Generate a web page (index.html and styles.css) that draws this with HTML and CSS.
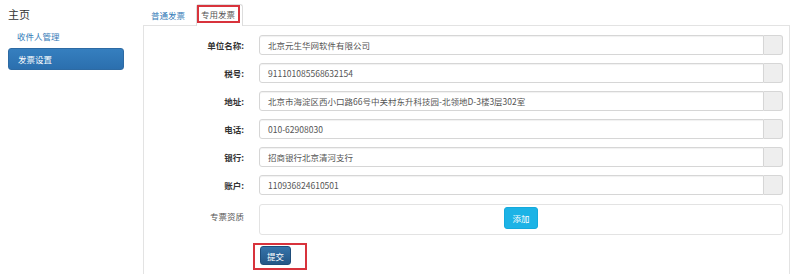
FILE: index.html
```html
<!DOCTYPE html>
<html lang="zh-CN">

<head>
    <meta charset="UTF-8">
    <title>发票设置</title>
    <link rel="stylesheet" href="styles.css">
</head>

<body>
    <div class="page">
        <div class="sidebar">
            <h3 class="side-title">主页</h3>
            <a class="side-link">收件人管理</a>
            <a class="side-link active">发票设置</a>
        </div>

        <div class="main">
            <ul class="tabs">
                <li class="tab">普通发票</li>
                <li class="tab active"><span class="mark">专用发票</span></li>
            </ul>

            <div class="panel">
                <div class="row">
                    <label class="label">单位名称:</label>
                    <div class="field"><span class="input">北京元生华网软件有限公司</span><span class="addon"></span></div>
                </div>
                <div class="row">
                    <label class="label">税号:</label>
                    <div class="field"><span class="input">911101085568632154</span><span class="addon"></span></div>
                </div>
                <div class="row">
                    <label class="label">地址:</label>
                    <div class="field"><span class="input">北京市海淀区西小口路66号中关村东升科技园-北领地D-3楼3层302室</span><span class="addon"></span></div>
                </div>
                <div class="row">
                    <label class="label">电话:</label>
                    <div class="field"><span class="input">010-62908030</span><span class="addon"></span></div>
                </div>
                <div class="row">
                    <label class="label">银行:</label>
                    <div class="field"><span class="input">招商银行北京清河支行</span><span class="addon"></span></div>
                </div>
                <div class="row">
                    <label class="label">账户:</label>
                    <div class="field"><span class="input">110936824610501</span><span class="addon"></span></div>
                </div>
                <div class="row row-upload">
                    <label class="label plain">专票资质</label>
                    <div class="upload-box">
                        <button class="btn-add">添加</button>
                    </div>
                </div>
                <div class="row row-submit">
                    <span class="label"></span>
                    <div class="submit-mark">
                        <button class="btn-submit">提交</button>
                    </div>
                </div>
            </div>
        </div>
    </div>
</body>

</html>
```

FILE: styles.css
```css
body {
    margin: 0;
    font-family: "Noto Sans CJK SC", "Liberation Sans", sans-serif;
    font-size: 8.5px;
    color: #333;
    background: #fff;
}

.page {
    display: flex;
    align-items: flex-start;
}

/* left menu */
.sidebar {
    width: 116px;
    margin-left: 8px;
    flex-shrink: 0;
}

.side-title {
    margin: 6px 0 3px 0;
    font-size: 11px;
    font-weight: normal;
    line-height: 16px;
    color: #333;
}

.side-link {
    display: block;
    height: 22px;
    line-height: 22px;
    padding-left: 9px;
    color: #337ab7;
    border-radius: 3px;
}

.side-link.active {
    margin-top: 1px;
    color: #fff;
    background: linear-gradient(#357fbf, #2b6fae);
    border: 1px solid #2d6aa3;
    height: 20px;
    line-height: 20px;
}

/* tabs */
.main {
    margin-left: 19px;
    width: 647px;
}

.tabs {
    list-style: none;
    margin: 0;
    padding: 0;
    height: 25px;
    display: flex;
    align-items: flex-end;
}

.tab {
    height: 20px;
    line-height: 20px;
    padding: 0 8px;
    color: #337ab7;
    margin-right: 3px;
}

.tab.active {
    display: flex;
    align-items: flex-start;
    color: #555;
    background: #fff;
    border: 1px solid #ddd;
    border-bottom: none;
    border-radius: 3px 3px 0 0;
    padding: 0 2px 0 0;
    height: 21px;
    margin-bottom: -1px;
    position: relative;
    z-index: 1;
}

.mark {
    display: block;
    border: 2px solid #d8333c;
    height: 14px;
    line-height: 14px;
    padding: 0 3px 0 2px;
}

/* form panel */
.panel {
    border: 1px solid #e3e3e3;
    height: 260px;
    padding: 9px 6px 0 0;
    box-sizing: border-box;
}

.row {
    display: flex;
    align-items: center;
    margin-bottom: 8px;
}

.label {
    width: 100px;
    flex-shrink: 0;
    text-align: right;
    font-weight: bold;
    margin-right: 15px;
    color: #333;
}

.label.plain {
    font-weight: normal;
    color: #555;
}

.field {
    flex: 1;
    display: flex;
    height: 20px;
}

.input {
    flex: 1;
    border: 1px solid #d6d6d6;
    border-radius: 3px 0 0 3px;
    padding: 0 8px;
    line-height: 18px;
    color: #555;
    box-shadow: inset 0 1px 1px rgba(0, 0, 0, 0.06);
}

.addon {
    width: 18px;
    background: #eee;
    border: 1px solid #d6d6d6;
    border-left: none;
    border-radius: 0 3px 3px 0;
}

.row-upload {
    align-items: flex-start;
    margin-top: 9px;
}

.row-upload .label {
    margin-top: 6px;
}

.upload-box {
    flex: 1;
    height: 31px;
    box-sizing: border-box;
    border: 1px solid #e3e3e3;
    border-radius: 3px;
    padding-top: 2px;
    text-align: center;
}

.btn-add {
    width: 34px;
    height: 22px;
    border: 1px solid #14a9dc;
    border-radius: 3px;
    background: #1cb3e6;
    color: #fff;
    font-family: inherit;
    font-size: 8.5px;
    padding: 0;
}

.row-submit {
    margin-top: 4px;
}

.submit-mark {
    margin-left: -6px;
    border: 2px solid #d8333c;
    padding: 1px 14px 3px 5px;
    height: 19px;
}

.btn-submit {
    width: 31px;
    height: 19px;
    padding: 0;
    border: 1px solid #1f4d7a;
    border-radius: 3px;
    background: linear-gradient(#3573aa, #245786);
    color: #fff;
    font-family: inherit;
    font-size: 8.5px;
}
```
